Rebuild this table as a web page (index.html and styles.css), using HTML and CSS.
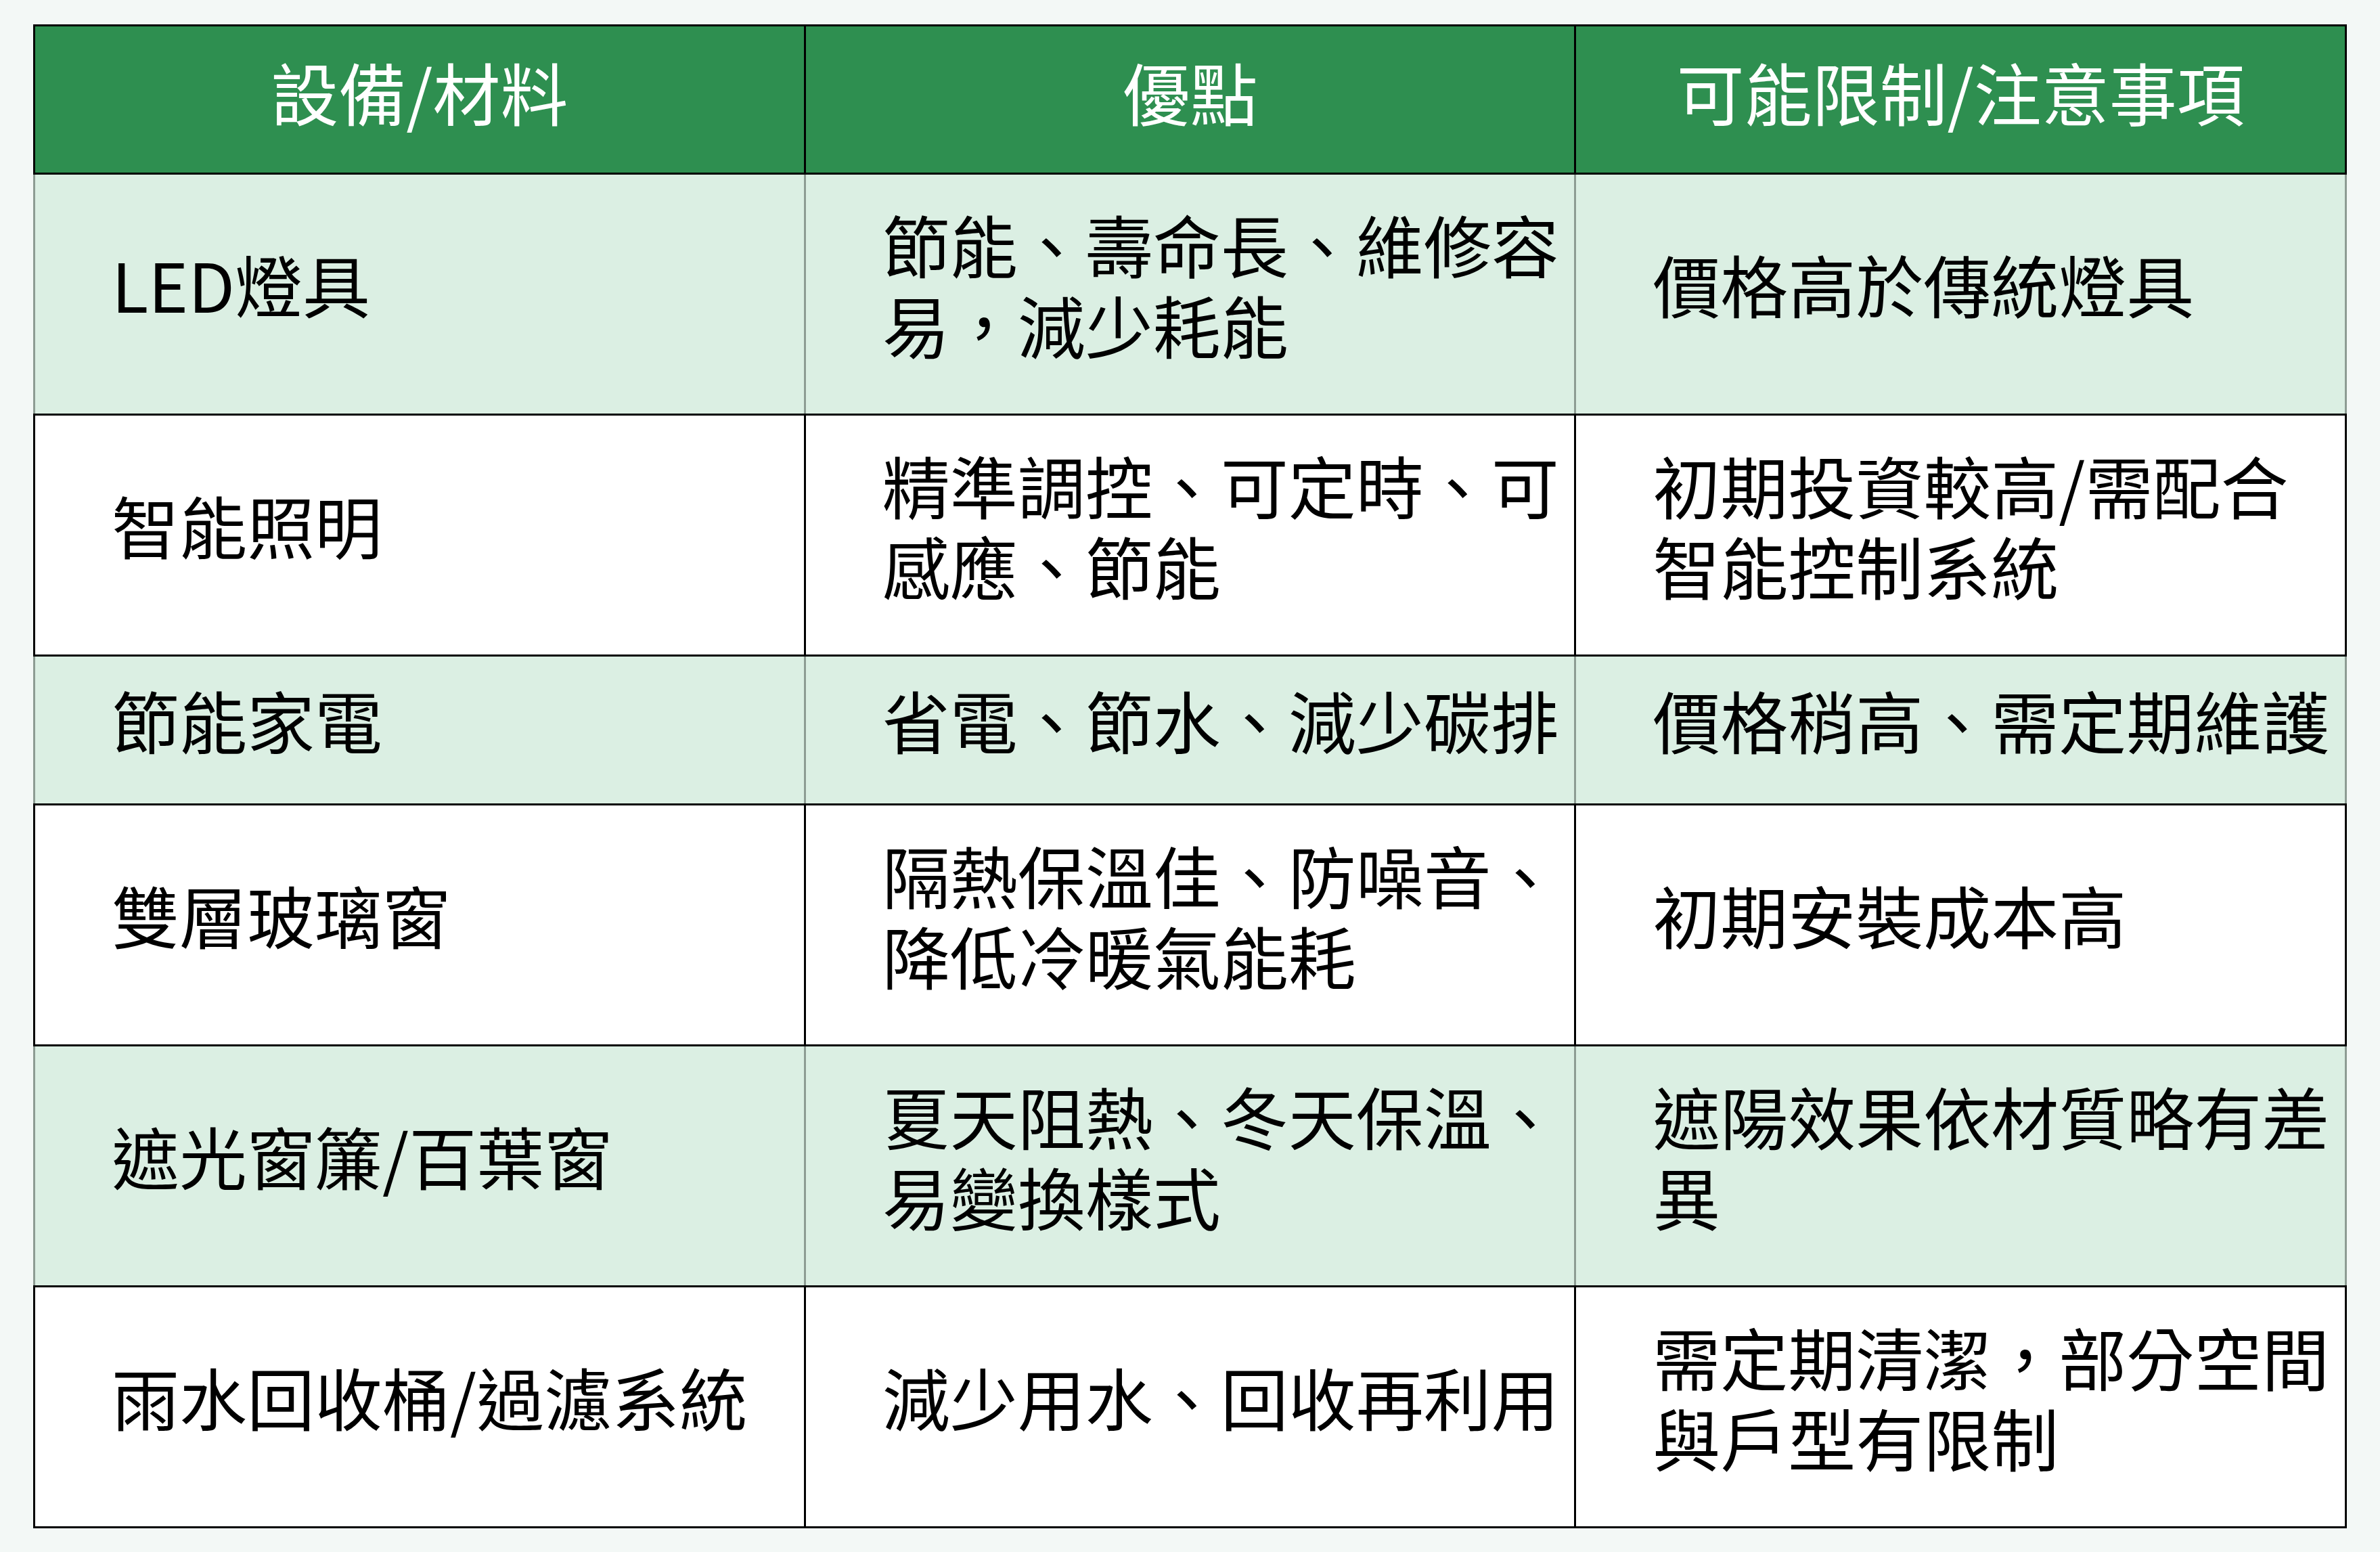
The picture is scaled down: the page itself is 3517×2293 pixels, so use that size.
FILE: index.html
```html
<!DOCTYPE html>
<html lang="zh-Hant">
<head>
<meta charset="utf-8">
<title>節能設備比較</title>
<link rel="stylesheet" href="styles.css">
</head>
<body>
<main class="page">
<table class="grid">
<colgroup><col class="c"><col class="c"><col class="c"></colgroup>
<thead>
<tr class="head"><th>設備/材料</th><th>優點</th><th>可能限制/注意事項</th></tr>
</thead>
<tbody>
<tr class="alt tall"><td>LED燈具</td><td>節能、壽命長、維修容易，減少耗能</td><td>價格高於傳統燈具</td></tr>
<tr class="tall"><td>智能照明</td><td>精準調控、可定時、可感應、節能</td><td>初期投資較高/需配合智能控制系統</td></tr>
<tr class="alt short"><td>節能家電</td><td>省電、節水、減少碳排</td><td>價格稍高、需定期維護</td></tr>
<tr class="tall"><td>雙層玻璃窗</td><td>隔熱保溫佳、防噪音、降低冷暖氣能耗</td><td>初期安裝成本高</td></tr>
<tr class="alt tall"><td>遮光窗簾/百葉窗</td><td>夏天阻熱、冬天保溫、易變換樣式</td><td>遮陽效果依材質略有差異</td></tr>
<tr class="tall"><td>雨水回收桶/過濾系統</td><td>減少用水、回收再利用</td><td>需定期清潔，部分空間與戶型有限制</td></tr>
</tbody>
</table>
</main>
</body>
</html>
```
FILE: styles.css
```css
html, body {
  margin: 0;
  padding: 0;
  background: #f3f8f6;
}
.page {
  padding: 36px 49px 38px 49px;
  font-family: "Noto Sans CJK TC", "Noto Sans CJK SC", "Noto Sans", sans-serif;
}
.grid {
  width: 3419px;
  border-collapse: collapse;
  table-layout: fixed;
  border: 3px solid #000;
}
.c { width: 33.333%; }
.head th {
  height: 219px;
  background: #2e8f50;
  color: #fff;
  font-weight: 400;
  font-size: 100px;
  line-height: 119px;
  border: 3px solid #000;
  padding: 0 0 26px 0;
  text-align: center;
  vertical-align: middle;
  box-sizing: border-box;
}
td {
  border: 3px solid #000;
  background: #fff;
  color: #000;
  font-size: 100px;
  line-height: 119px;
  padding: 0 16px 32px 113px;
  vertical-align: middle;
  text-align: left;
}
.alt td {
  background: #dbefe3;
  border-left-color: #8d9c93;
  border-right-color: #8d9c93;
}
.tall td { height: 321px; }
.short td { height: 185px; }
```
